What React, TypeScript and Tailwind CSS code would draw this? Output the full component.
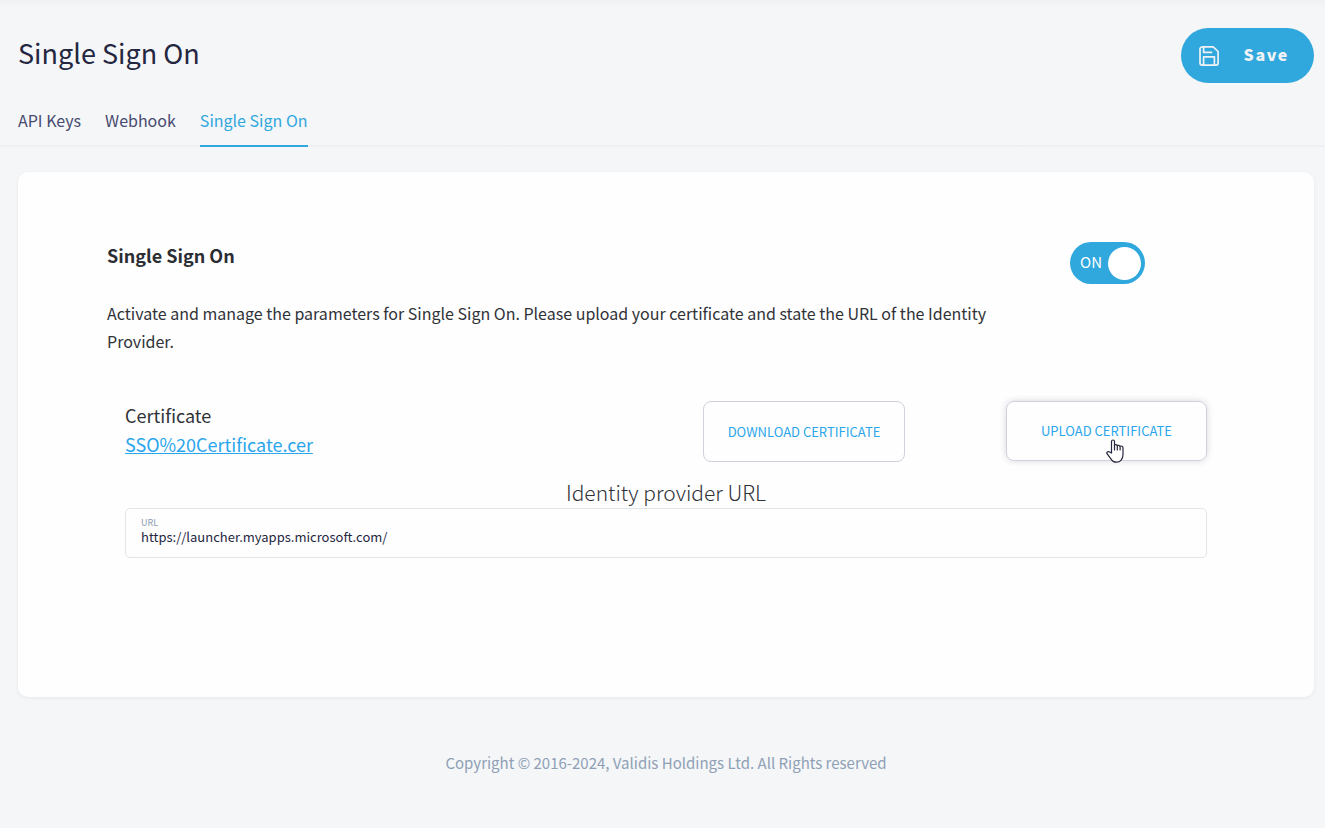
import { useState } from "react";

const tabs = ["API Keys", "Webhook", "Single Sign On"];

function SaveIcon() {
  return (
    <svg viewBox="0 0 20 20" className="h-5 w-5" fill="none" stroke="currentColor" strokeWidth="1.7" strokeLinejoin="round" aria-hidden="true">
      <path d="M3 .9h11.2l4.9 4.6v11.6a2 2 0 0 1-2 2H3a2 2 0 0 1-2-2V3a2 2 0 0 1 2-2z" />
      <path d="M4.600 1v5.400h8.600M4.600 19v-8.200h10.800V19" />
    </svg>
  );
}

function HandPointer() {
  return (
    <svg viewBox="0 0 18 24" className="pointer-events-none absolute top-[37px] left-[99px] h-6 w-[18px]" aria-hidden="true">
      <path
        d="M5.500 14V2.500a1.500 1.500 0 0 1 3 0V6c.8-.8 2.300-.5 2.700.6.9-.6 2.200-.3 2.600.6 1.400-.5 3.200 0 3.200 1.700v6.600c0 4.500-2.700 7.700-6.500 7.700-2.800 0-4.400-1.300-5.800-3.600L1 14.700c-.7-1.500.8-2.600 2.200-1.900z"
        fill="#fff"
        stroke="#25263f"
        strokeWidth="1.200"
        strokeLinejoin="round"
      />
      <path d="M8.500 6v5M11.300 6.500V11M14.100 7.500V11" fill="none" stroke="#25263f" strokeWidth="1.200" strokeLinecap="round" />
    </svg>
  );
}

function Header() {
  return (
    <header className="flex items-start justify-between pt-7 pr-[11px] pl-[18px]">
      <h1 className="text-[27px] leading-[50px] text-[#25263f]">Single Sign On</h1>
      <button type="button" className="flex h-[55px] w-[133px] items-center justify-between rounded-full bg-[#30a7dd] pr-[25px] pl-[18px] text-[#f0f2f5]">
        <SaveIcon />
        <span className="pb-1 text-base font-black tracking-widest">Save</span>
      </button>
    </header>
  );
}

function Tabs() {
  const [active, setActive] = useState("Single Sign On");

  return (
    <nav className="mt-[13px] flex gap-6 border-b-2 border-[#eff0f3] px-[18px]">
      {tabs.map((tab) => (
        <a
          key={tab}
          href="#"
          onClick={() => setActive(tab)}
          className={
            tab === active
              ? "-mb-[2px] border-b-2 border-[#30a7dd] text-base leading-[49px] text-[#30a7dd]"
              : "-mb-[2px] border-b-2 border-transparent text-base leading-[49px] text-[#484b70]"
          }
        >
          {tab}
        </a>
      ))}
    </nav>
  );
}

function Toggle() {
  const [on, setOn] = useState(true);

  return (
    <label className="flex h-[42px] w-[75px] shrink-0 cursor-pointer items-center justify-between rounded-full bg-[#30a7dd] pr-1 pl-[10px] text-white">
      <input type="checkbox" className="sr-only" aria-label="Single Sign On" checked={on} onChange={() => setOn(!on)} />
      <span className="pb-0.5 text-[15px] leading-6">{on ? "ON" : "OFF"}</span>
      <span className="h-[33px] w-[33px] rounded-full bg-white" />
    </label>
  );
}

export default function App() {
  const [url, setUrl] = useState("https://launcher.myapps.microsoft.com/");

  return (
    <div className="flex min-h-screen flex-col bg-[#f4f6f8] bg-linear-to-b from-[#eff1f3] to-[#f4f6f8] to-[8px] font-['Noto_Sans_CJK_SC',sans-serif]">
      <Header />
      <Tabs />

      <main className="mt-[25px] mr-[11px] ml-[18px] rounded-[10px] bg-[#fefefe] px-[89px] pt-[70px] pb-[139px] shadow-[0_1px_4px_rgba(0,0,0,0.06)]">
        <div className="flex justify-between pr-20">
          <div className="max-w-[900px]">
            <h2 className="text-lg leading-[26px] font-bold text-[#2b2d33]">Single Sign On</h2>
            <p className="mt-[31px] text-base leading-7 text-[#303238]">
              Activate and manage the parameters for Single Sign On. Please upload your certificate and state the URL of the
              Identity Provider.
            </p>
          </div>
          <Toggle />
        </div>

        <div className="mt-[46px] flex gap-[101px] px-[18px]">
          <div className="flex-1 text-lg leading-[29px]">
            <p className="text-[#303238]">Certificate</p>
            <a href="#" className="text-[#2ba6ec] underline">SSO%20Certificate.cer</a>
          </div>
          <button type="button" className="h-[61px] w-[202px] rounded-lg border border-[#d2d0dc] text-[13px] text-[#2ba6ec]">
            DOWNLOAD CERTIFICATE
          </button>
          <button type="button" className="relative h-[60px] w-[201px] rounded-lg border border-[#d2d0dc] text-[13px] text-[#2ba6ec] shadow-[0_0_6px_rgba(60,50,90,0.2)]">
            UPLOAD CERTIFICATE
            <HandPointer />
          </button>
        </div>

        <section className="mt-[14px] px-[18px]">
          <h3 className="text-center text-[21px] leading-8 font-light text-[#303238]">Identity provider URL</h3>
          <div className="flex h-[50px] flex-col rounded-[5px] border border-[#e1e5ea] px-[15px] pt-2">
            <label htmlFor="url" className="text-[9px] leading-[11px] text-[#8b9bb0]">URL</label>
            <input
              id="url"
              type="text"
              value={url}
              onChange={(e) => setUrl(e.target.value)}
              className="h-[18px] w-full bg-transparent text-[13px] text-[#25263f] outline-none"
            />
          </div>
        </section>
      </main>

      <footer className="mt-[52px] mr-[11px] ml-[18px] text-center text-[15px] leading-7 text-[#8fa0b5]">
        Copyright © 2016-2024, Validis Holdings Ltd. All Rights reserved
      </footer>
    </div>
  );
}
